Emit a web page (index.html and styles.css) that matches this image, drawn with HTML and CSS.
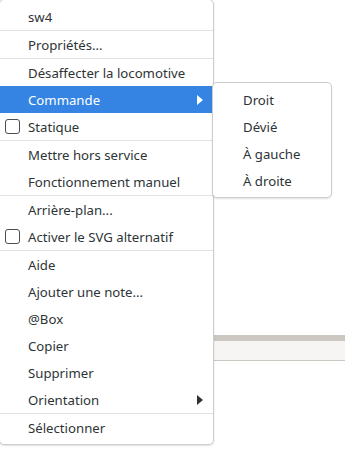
FILE: index.html
```html
<!DOCTYPE html>
<html lang="fr">
<head>
  <meta charset="UTF-8" />
  <title>Menu</title>
  <link rel="stylesheet" href="styles.css">
</head>
<body>
  <div class="window">
    <div class="toolbar"></div>
  </div>

  <ul class="menu main-menu">
    <li class="item">sw4</li>
    <li class="sep"></li>
    <li class="item">Propriétés...</li>
    <li class="sep"></li>
    <li class="item">Désaffecter la locomotive</li>
    <li class="item active">Commande<span class="arrow"></span></li>
    <li class="item"><span class="check"></span>Statique</li>
    <li class="sep"></li>
    <li class="item">Mettre hors service</li>
    <li class="item">Fonctionnement manuel</li>
    <li class="sep"></li>
    <li class="item">Arrière-plan...</li>
    <li class="item"><span class="check"></span>Activer le SVG alternatif</li>
    <li class="sep"></li>
    <li class="item">Aide</li>
    <li class="item">Ajouter une note...</li>
    <li class="item">@Box</li>
    <li class="item">Copier</li>
    <li class="item">Supprimer</li>
    <li class="item">Orientation<span class="arrow"></span></li>
    <li class="sep"></li>
    <li class="item">Sélectionner</li>
  </ul>

  <ul class="menu sub-menu">
    <li class="item">Droit</li>
    <li class="item">Dévié</li>
    <li class="item">À gauche</li>
    <li class="item">À droite</li>
  </ul>
</body>
</html>
```

FILE: styles.css
```css
body {
  margin: 0;
  background: #fff;
  font-family: 'Noto Sans', sans-serif;
  font-size: 13.2px;
  color: #2e3436;
  position: relative;
  height: 469px;
  overflow: hidden;
}
.window {
  padding-top: 335px;
}
.toolbar {
  height: 19px;
  border-top: 6px solid #cdc7c2;
  border-bottom: 1px solid #cdc7c2;
  background: #f6f5f4;
}
.menu {
  list-style: none;
  margin: 0;
  padding: 3px 0;
  background: #fff;
  border: 1px solid #cdcdcd;
  border-radius: 5px;
  box-shadow: 0 1px 2px rgba(0,0,0,0.12);
}
.main-menu {
  position: absolute;
  left: -1px;
  top: -1px;
  width: 213px;
}
.sub-menu {
  position: absolute;
  left: 212px;
  top: 82px;
  width: 118px;
}
.item {
  position: relative;
  height: 26px;
  padding-top: 1px;
  line-height: 26px;
  padding-left: 28px;
  white-space: nowrap;
}
.sub-menu .item {
  padding-left: 30px;
}
.sep {
  height: 1px;
  background: #e2e2e2;
}
.item.active {
  background: #3584e4;
  color: #fff;
}
.check {
  position: absolute;
  left: 5px;
  top: 6px;
  width: 13px;
  height: 13px;
  border: 1px solid #4a4f52;
  border-radius: 3px;
  background: #fff;
}
.arrow {
  position: absolute;
  right: 10px;
  top: 9px;
  width: 0;
  height: 0;
  border-top: 5px solid transparent;
  border-bottom: 5px solid transparent;
  border-left: 6px solid #2e3436;
}
.active .arrow {
  border-left-color: #fff;
}
```
